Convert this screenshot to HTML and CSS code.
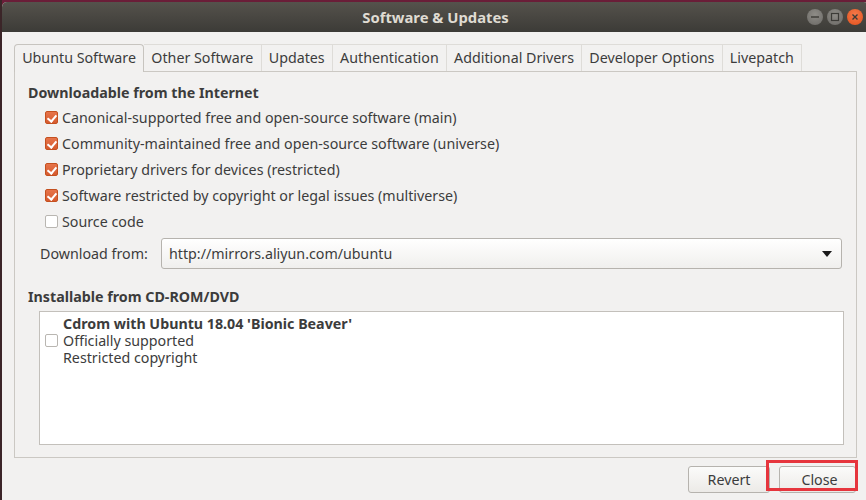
FILE: index.html
```html
<!DOCTYPE html>
<html>
<head>
<meta charset="utf-8">
<link rel="stylesheet" href="styles.css">
</head>
<body>
<div class="desktop">
  <div class="window">
    <div class="titlebar">
      <span class="title">Software &amp; Updates</span>
      <div class="wbtns">
        <span class="wbtn"><svg width="16" height="16" viewBox="0 0 16 16"><rect x="4" y="7.3" width="8" height="1.4" fill="#3c3b37"/></svg></span>
        <span class="wbtn"><svg width="16" height="16" viewBox="0 0 16 16"><rect x="4.5" y="4.5" width="7" height="7" fill="none" stroke="#3c3b37" stroke-width="1.2"/></svg></span>
        <span class="wbtn close"><svg width="16" height="16" viewBox="0 0 16 16"><path d="M5.5 5.5 L10.5 10.5 M10.5 5.5 L5.5 10.5" stroke="#3c3b37" stroke-width="1.4"/></svg></span>
      </div>
    </div>
    <div class="content">
      <div class="tabs">
        <div class="tab active">Ubuntu Software</div>
        <div class="tab">Other Software</div>
        <div class="tab">Updates</div>
        <div class="tab">Authentication</div>
        <div class="tab">Additional Drivers</div>
        <div class="tab">Developer Options</div>
        <div class="tab">Livepatch</div>
      </div>
      <div class="panel">
        <div class="section-title">Downloadable from the Internet</div>
        <div class="checks">
          <div class="row"><span class="cb on"></span><span>Canonical-supported free and open-source software (main)</span></div>
          <div class="row"><span class="cb on"></span><span>Community-maintained free and open-source software (universe)</span></div>
          <div class="row"><span class="cb on"></span><span>Proprietary drivers for devices (restricted)</span></div>
          <div class="row"><span class="cb on"></span><span>Software restricted by copyright or legal issues (multiverse)</span></div>
          <div class="row"><span class="cb"></span><span>Source code</span></div>
        </div>
        <div class="download-row">
          <span class="dl-label">Download from:</span>
          <div class="combo"><span>http://mirrors.aliyun.com/ubuntu</span><span class="arrow"></span></div>
        </div>
        <div class="section-title second">Installable from CD-ROM/DVD</div>
        <div class="listbox">
          <div class="cd-item">
            <span class="cb"></span>
            <div class="cd-text">
              <div class="bold">Cdrom with Ubuntu 18.04 'Bionic Beaver'</div>
              <div>Officially supported</div>
              <div>Restricted copyright</div>
            </div>
          </div>
        </div>
      </div>
      <div class="buttons">
        <div class="btn revert">Revert</div>
        <div class="btn closebtn">Close</div>
      </div>
    </div>
  </div>
  <div class="highlight"></div>
</div>
</body>
</html>
```

FILE: styles.css
```css
* { box-sizing: border-box; }
html, body { margin: 0; padding: 0; }
body {
  width: 866px;
  height: 500px;
  overflow: hidden;
  background: #5e1a33;
  font-family: "Noto Sans", "Open Sans", sans-serif;
  font-size: 14.25px;
  color: #3c3c3c;
}
.desktop {
  position: relative;
  width: 866px;
  height: 500px;
  overflow: hidden;
  background: linear-gradient(90deg, #3b2528 0, #3b2528 2px, #6a1d38 2px);
  padding: 2px 0 0 2px;
}
.window {
  width: 867px;
  height: 510px;
  background: #f2f1f0;
  border-radius: 5px 5px 0 0;
  overflow: hidden;
}
.titlebar {
  height: 30px;
  background: linear-gradient(#55524c, #3c3b37);
  display: flex;
  align-items: center;
  justify-content: center;
  position: relative;
}
.title {
  color: #dfdbd2;
  font-weight: bold;
  font-size: 14.8px;
}
.wbtns {
  position: absolute;
  right: 6px;
  top: 7px;
  display: flex;
  gap: 4px;
}
.wbtn {
  width: 16px;
  height: 16px;
  border-radius: 50%;
  background: radial-gradient(circle at 50% 35%, #8e8c87, #6b6965);
  display: block;
}
.wbtn svg { display: block; }
.wbtn.close { background: radial-gradient(circle at 50% 35%, #f47a4a, #e2501c); }
.content {
  padding: 12px 12px 0 12px;
}
.tabs {
  display: flex;
  height: 27px;
  align-items: flex-end;
}
.tab {
  height: 27px;
  padding: 0 7.2px;
  line-height: 26px;
  border: 1px solid #dedcd8;
  border-bottom: none;
  border-left: none;
  background: #f2f1f0;
}
.tab.active {
  border: 1px solid #c7c4bf;
  border-bottom: none;
  border-radius: 4px 4px 0 0;
  background: #f2f1f0;
  height: 28px;
  margin-bottom: -1px;
  position: relative;
  z-index: 1;
}
.panel {
  border: 1px solid #cbc8c3;
  height: 387px;
  padding: 11px 14px 0 13px;
}
.section-title {
  font-weight: bold;
  line-height: 20px;
  height: 20px;
}
.section-title.second { margin-top: 18px; }
.checks { margin-top: 1px; }
.row {
  height: 26px;
  display: flex;
  align-items: center;
  padding-left: 17px;
  gap: 4px;
}
.cb {
  width: 13px;
  height: 13px;
  border: 1px solid #b9b6b1;
  border-radius: 2px;
  background: #fff;
  flex: none;
  position: relative;
}
.cb.on {
  background: linear-gradient(#e6744a, #d65a2e);
  border-color: #c4501f;
}
.cb.on::after {
  content: "";
  position: absolute;
  left: 3px;
  top: 1px;
  width: 4px;
  height: 7px;
  border: solid #fff;
  border-width: 0 2px 2px 0;
  transform: rotate(40deg);
}
.download-row {
  margin-top: 4px;
  display: flex;
  align-items: center;
  height: 31px;
}
.dl-label {
  margin-left: 12px;
  width: 121px;
}
.combo {
  flex: 1;
  height: 31px;
  border: 1px solid #b6b3ae;
  border-radius: 3px;
  background: linear-gradient(#ffffff, #f0efed);
  display: flex;
  align-items: center;
  justify-content: space-between;
  padding: 0 9px 0 7px;
}
.arrow {
  width: 0;
  height: 0;
  border-left: 5px solid transparent;
  border-right: 5px solid transparent;
  border-top: 6px solid #1a1a1a;
}
.listbox {
  margin: 4px -2px 0 11px;
  height: 134px;
  background: #fff;
  border: 1px solid #c3c0bb;
  padding: 3px 5px;
}
.cd-item {
  display: flex;
  align-items: center;
  gap: 5px;
}
.cd-text { line-height: 17px; }
.bold { font-weight: bold; }
.buttons {
  display: flex;
  justify-content: flex-end;
  gap: 9px;
  margin-top: 8px;
  padding-right: 1px;
}
.btn {
  height: 27px;
  line-height: 25px;
  border: 1px solid #b6b3ae;
  border-radius: 3px;
  background: linear-gradient(#fbfbfa, #eceae7);
  text-align: center;
}
.revert { width: 82px; }
.closebtn { width: 77px; padding-left: 4px; }
.highlight {
  position: absolute;
  left: 766px;
  top: 460px;
  width: 92px;
  height: 31px;
  border: 3px solid #e6353d;
}
```
